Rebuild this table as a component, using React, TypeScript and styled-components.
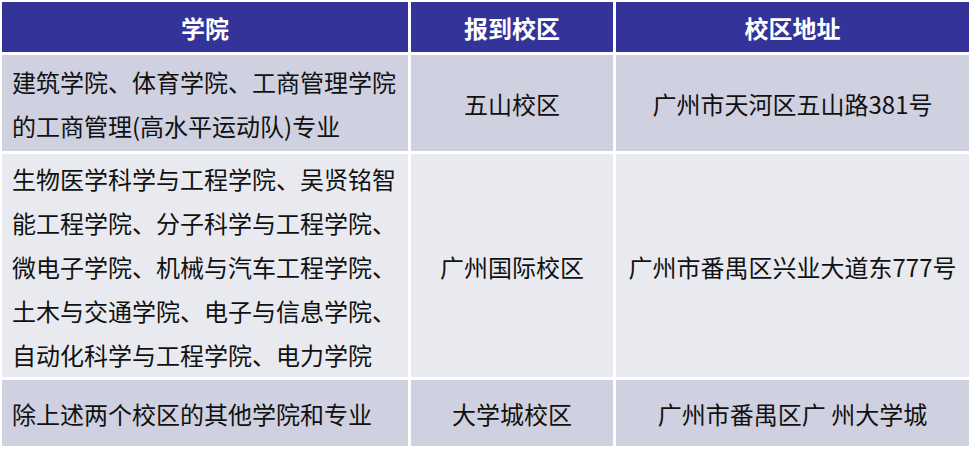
import React from "react";
import styled, { createGlobalStyle } from "styled-components";

const Global = createGlobalStyle`
  html, body { margin: 0; padding: 0; background: #ffffff; }
  body { font-family: "Noto Sans CJK SC", "Noto Sans", sans-serif; }
`;

const Table = styled.div`
  display: grid;
  grid-template-columns: 406px 202px 353px;
  grid-template-rows: 50px 96px 223px 66px;
  gap: 3px;
  padding: 2px;
  width: 972px;
  box-sizing: border-box;
  background: #ffffff;
`;

const HeadCell = styled.div`
  background: #333399;
  color: #ffffff;
  font-weight: 700;
  font-size: 24px;
  display: flex;
  align-items: center;
  justify-content: center;
`;

const Cell = styled.div<{ $shade: "dark" | "light"; $align?: "left" | "center" }>`
  background: ${(p) => (p.$shade === "dark" ? "#cfd0e0" : "#e9eaef")};
  color: #111111;
  font-size: 24px;
  line-height: 44px;
  display: flex;
  flex-direction: column;
  justify-content: center;
  align-items: ${(p) => (p.$align === "left" ? "flex-start" : "center")};
  padding: 2px 10px 0;
  box-sizing: border-box;
  white-space: nowrap;
`;

const Line = styled.span`
  display: block;
`;

const rows: { shade: "dark" | "light"; college: string[]; campus: string; address: string }[] = [
  {
    shade: "dark",
    college: ["建筑学院、体育学院、工商管理学院", "的工商管理(高水平运动队)专业"],
    campus: "五山校区",
    address: "广州市天河区五山路381号",
  },
  {
    shade: "light",
    college: [
      "生物医学科学与工程学院、吴贤铭智",
      "能工程学院、分子科学与工程学院、",
      "微电子学院、机械与汽车工程学院、",
      "土木与交通学院、电子与信息学院、",
      "自动化科学与工程学院、电力学院",
    ],
    campus: "广州国际校区",
    address: "广州市番禺区兴业大道东777号",
  },
  {
    shade: "dark",
    college: ["除上述两个校区的其他学院和专业"],
    campus: "大学城校区",
    address: "广州市番禺区广 州大学城",
  },
];

export default function App() {
  return (
    <>
      <Global />
      <Table>
        <HeadCell>学院</HeadCell>
        <HeadCell>报到校区</HeadCell>
        <HeadCell>校区地址</HeadCell>
        {rows.map((r, i) => (
          <React.Fragment key={i}>
            <Cell $shade={r.shade} $align="left">
              {r.college.map((l, j) => (
                <Line key={j}>{l}</Line>
              ))}
            </Cell>
            <Cell $shade={r.shade}>{r.campus}</Cell>
            <Cell $shade={r.shade}>{r.address}</Cell>
          </React.Fragment>
        ))}
      </Table>
    </>
  );
}
